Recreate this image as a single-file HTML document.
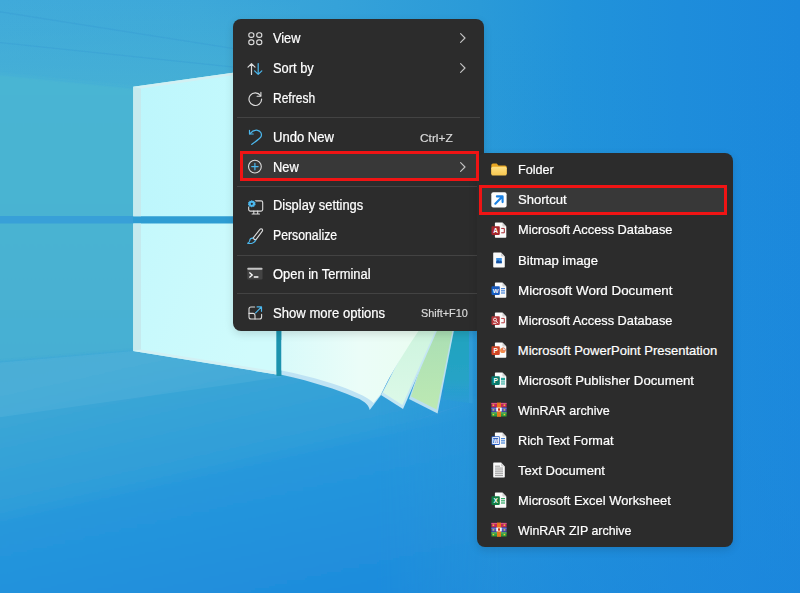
<!DOCTYPE html>
<html lang="en">
<head>
<meta charset="utf-8">
<title>Desktop context menu</title>
<style>
html,body{margin:0;padding:0;}
body{width:800px;height:593px;overflow:hidden;position:relative;background:#2a96d8;font-family:"Liberation Sans",sans-serif;}
#wall{position:absolute;left:0;top:0;width:800px;height:593px;display:block;}
.menu{position:absolute;background:#2c2c2c;border-radius:8px;box-shadow:0 3px 9px rgba(0,0,0,0.13);}
#m1{left:233px;top:19.3px;width:250.6px;height:311.7px;}
#m2{z-index:2;left:477px;top:152.5px;width:255.5px;height:394.5px;}
.row{position:absolute;left:0;right:0;height:30px;color:#fff;font-size:14px;line-height:30px;white-space:nowrap;}
.row .lbl{position:absolute;left:40.2px;top:0px;-webkit-text-stroke:0.22px #fff;display:inline-block;transform-origin:0 50%;}
#m2 .row .lbl{left:40.8px;top:0.3px;font-size:13px;}
.row .key{position:absolute;top:0.8px;right:0;font-size:11.5px;color:#dadada;-webkit-text-stroke:0.2px #dadada;display:inline-block;transform-origin:0 50%;}
.row svg.ic{position:absolute;left:14px;top:7.6px;width:16px;height:16px;overflow:visible;}
#m2 .row svg.ic{top:7px;}
.row svg.chev{position:absolute;left:226px;top:9px;width:8px;height:12px;}
.sep{position:absolute;left:4px;right:4px;height:1px;background:#434343;}
.hl{position:absolute;box-sizing:border-box;border:3.3px solid #f01414;background:#383838;}
</style>
</head>
<body>
<svg id="wall" viewBox="0 0 800 593" width="800" height="593">
  <defs>
    <linearGradient id="gbase" x1="0" y1="0" x2="1" y2="0">
      <stop offset="0" stop-color="#40aada"/>
      <stop offset="0.25" stop-color="#3da8d9"/>
      <stop offset="0.42" stop-color="#35a2d9"/>
      <stop offset="0.6" stop-color="#2a9ad8"/>
      <stop offset="0.72" stop-color="#2193da"/>
      <stop offset="0.85" stop-color="#1e8ddb"/>
      <stop offset="1" stop-color="#1b88dc"/>
    </linearGradient>
    <linearGradient id="gvert" x1="0" y1="0" x2="0" y2="1">
      <stop offset="0" stop-color="#1f8cdc" stop-opacity="0"/>
      <stop offset="0.5" stop-color="#1f8cdc" stop-opacity="0.1"/>
      <stop offset="1" stop-color="#1c86dd" stop-opacity="0.55"/>
    </linearGradient>
    <linearGradient id="gwall" x1="0" y1="0" x2="0" y2="1">
      <stop offset="0" stop-color="#4ab5d3"/>
      <stop offset="0.5" stop-color="#4ab3d2"/>
      <stop offset="1" stop-color="#45aed3"/>
    </linearGradient>
    <linearGradient id="gfloor" gradientUnits="userSpaceOnUse" x1="0" y1="379" x2="69.8" y2="691">
      <stop offset="0" stop-color="#41aad4"/>
      <stop offset="0.22" stop-color="#36a3d7"/>
      <stop offset="0.40" stop-color="#2e9dd9"/>
      <stop offset="0.45" stop-color="#2697db"/>
      <stop offset="0.72" stop-color="#2190dc"/>
      <stop offset="1" stop-color="#1c89dc"/>
    </linearGradient>
    <linearGradient id="gceil" gradientUnits="userSpaceOnUse" x1="0" y1="0" x2="0" y2="85">
      <stop offset="0" stop-color="#46b0d5" stop-opacity="0"/>
      <stop offset="1" stop-color="#46b0d5" stop-opacity="0.88"/>
    </linearGradient>
    <linearGradient id="gfade" x1="0" y1="0" x2="1" y2="0">
      <stop offset="0" stop-color="#fff" stop-opacity="1"/>
      <stop offset="0.75" stop-color="#fff" stop-opacity="1"/>
      <stop offset="1" stop-color="#fff" stop-opacity="0"/>
    </linearGradient>
    <mask id="mfloor"><rect x="0" y="300" width="500" height="300" fill="url(#gfade)"/></mask>
    <linearGradient id="gpane" x1="0" y1="0" x2="1" y2="0">
      <stop offset="0" stop-color="#bdf6fc"/>
      <stop offset="1" stop-color="#c6fafd"/>
    </linearGradient>
    <linearGradient id="gpane2" x1="0" y1="0" x2="1" y2="0.4">
      <stop offset="0" stop-color="#c4f8fc"/>
      <stop offset="1" stop-color="#d0fbfc"/>
    </linearGradient>
    <linearGradient id="gfront" x1="0" y1="0" x2="1" y2="0">
      <stop offset="0" stop-color="#d8fafa"/>
      <stop offset="0.55" stop-color="#ebfdf8"/>
      <stop offset="1" stop-color="#eafdf1"/>
    </linearGradient>
    <linearGradient id="gteal" x1="0" y1="0" x2="0" y2="1">
      <stop offset="0" stop-color="#1fa3bd"/>
      <stop offset="0.7" stop-color="#26a3c6"/>
      <stop offset="1" stop-color="#2a9dd2" stop-opacity="0.6"/>
    </linearGradient>
    <linearGradient id="gp2" x1="0" y1="0" x2="0" y2="1">
      <stop offset="0" stop-color="#cdf4de"/>
      <stop offset="1" stop-color="#dcf9e8"/>
    </linearGradient>
    <linearGradient id="gp3" x1="0" y1="0" x2="0" y2="1">
      <stop offset="0" stop-color="#a9deb4"/>
      <stop offset="1" stop-color="#bde9b3"/>
    </linearGradient>
    <filter id="b1" x="-5%" y="-5%" width="110%" height="110%"><feGaussianBlur stdDeviation="0.6"/></filter>
    <filter id="b2" x="-5%" y="-5%" width="110%" height="110%"><feGaussianBlur stdDeviation="1.5"/></filter>
  </defs>
  <!-- ceiling / base -->
  <rect width="800" height="593" fill="url(#gbase)"/>
  <rect width="800" height="593" fill="url(#gvert)"/>
  <polygon points="-5,-5 300,-5 300,64 134,87.5 -5,73.5" fill="url(#gceil)"/>
  <g filter="url(#b1)" stroke="#3498d0" stroke-opacity="0.35" stroke-width="1.3" fill="none"><path d="M-5,11 L300,59"/><path d="M-5,42 L300,74"/></g>
  <!-- wall -->
  <polygon points="-5,73.5 134,87.5 300,64 300,380 134,351 -5,362.5" fill="url(#gwall)" filter="url(#b2)"/>
  <!-- floor -->
  <g mask="url(#mfloor)">
    <polygon points="-5,362.5 134,351 300,378 500,400 500,600 -5,600" fill="url(#gfloor)" filter="url(#b2)"/>
  </g>
  <polygon points="-5,363 134,351 276.5,374.4 282,377 -5,418" fill="#ffffff" opacity="0.055" filter="url(#b1)"/>
  <!-- horizontal band left -->
  <rect x="-5" y="216" width="140" height="7.5" fill="#37a0d8" filter="url(#b1)"/>
  <g filter="url(#b1)">
    <!-- gap behind panes -->
    <rect x="133" y="215" width="150" height="10" fill="#2f9dd3"/>
    <!-- upper-left pane -->
    <polygon points="133.2,86.8 276.5,66.6 276.5,216.3 133.2,216.3" fill="url(#gpane)"/>
    <polygon points="133.2,86.8 141,88 141,216.3 133.2,216.3" fill="#c6eaee"/>
    <polygon points="133.2,86.8 276.5,66.6 276.5,69 141,88.4" fill="#d2f0f3"/>
    <!-- lower-left pane -->
    <polygon points="133.2,223.4 276.5,223.4 276.5,374.4 133.2,350.9" fill="url(#gpane2)"/>
    <polygon points="133.2,223.4 141,223.4 141,350 133.2,350.9" fill="#c6eaee"/>
    <polygon points="133.2,350.9 276.5,374.4 276.5,371.6 141,349.4" fill="#d3f1f4"/>
    <!-- divider -->
    <rect x="276.5" y="60" width="5" height="316" fill="#1f93ad"/>
    <!-- teal page -->
    <polygon points="450,325 469,325 469,403 443,399.5" fill="url(#gteal)"/>
    <polygon points="469,325 472.5,325 472.5,403.5 469,403" fill="#3aa4dc" opacity="0.5"/>
    <!-- reflection wedge -->
    <polygon points="439.5,411.5 468.5,403.4 405,424" fill="#3a9cdc" opacity="0.45"/>
    <!-- third page -->
    <polygon points="435,325 455,325 437.6,413.5 409,399" fill="#b9dff0"/>
    <polygon points="435,325 453.6,325 436.6,409.6 411,396.4" fill="url(#gp3)"/>
    <!-- second page -->
    <polygon points="417,325 439.5,325 403,409 381,395" fill="#c4e6f3"/>
    <polygon points="417,325 438,325 402.4,405 383,392.6" fill="url(#gp2)"/>
    <!-- front page lip -->
    <path d="M281.5,340 L400,340 Q392,372 381,395 L369.7,410 C368.5,404 363,400 352.5,396.3 C337.5,389.7 315,382.2 281.5,374.7 Z" fill="#bfe3f4"/>
    <!-- front page -->
    <path d="M281.5,325 L422.5,325 Q397,362 380.5,394.5 L373.5,403 C369,398.5 362,395 352.5,391 C337.5,384.6 315,377.6 281.5,370.6 Z" fill="url(#gfront)"/>
  </g>
</svg>

<div class="menu" id="m1">
  <div class="row" style="top:4px"><svg class="ic" viewBox="0 0 16 16"><g fill="none" stroke="#dcdcdc" stroke-width="1.15"><rect x="1.8" y="1.7" width="5.1" height="4.7" rx="2.2"/><rect x="9.7" y="1.7" width="5.1" height="4.7" rx="2.2"/><rect x="1.8" y="8.9" width="5.1" height="4.7" rx="2.2"/><rect x="9.7" y="8.9" width="5.1" height="4.7" rx="2.2"/></g></svg><span class="lbl" style="transform:scaleX(0.910)">View</span><svg class="chev" viewBox="0 0 8 12"><polyline points="1.6,1.7 6,6 1.6,10.3" fill="none" stroke="#c4c4c4" stroke-width="1.15" stroke-linecap="round" stroke-linejoin="round"/></svg></div>
  <div class="row" style="top:34px"><svg class="ic" viewBox="0 0 16 16"><g fill="none" stroke-width="1.2" stroke-linecap="round" stroke-linejoin="round"><path d="M4.5,13.4 V2.7 M1,6.1 L4.5,2.6 L8,6.1" stroke="#dcdcdc"/><path d="M11.2,2.6 V13.3 M7.6,9.9 L11.2,13.4 L14.8,9.9" stroke="#4cb8ee"/></g></svg><span class="lbl" style="transform:scaleX(0.918)">Sort by</span><svg class="chev" viewBox="0 0 8 12"><polyline points="1.6,1.7 6,6 1.6,10.3" fill="none" stroke="#c4c4c4" stroke-width="1.15" stroke-linecap="round" stroke-linejoin="round"/></svg></div>
  <div class="row" style="top:64px"><svg class="ic" viewBox="0 0 16 16"><g transform="translate(0.6,0)"><g fill="none" stroke="#dcdcdc" stroke-width="1.15" stroke-linecap="round" stroke-linejoin="round"><path d="M12.9,4.6 A6.3,6.3 0 1 0 14,8"/><path d="M13.3,1.4 V5.2 H9.5"/></g></g></svg><span class="lbl" style="transform:scaleX(0.859)">Refresh</span></div>
  <div class="sep" style="top:97.5px"></div>
  <div class="row" style="top:102.4px"><svg class="ic" viewBox="0 0 16 16"><g fill="none" stroke="#4cb8ee" stroke-width="1.2" stroke-linecap="round" stroke-linejoin="round"><path d="M2.5,1.3 V5 H6.2"/><path d="M2.8,4.8 C5,2.2 8,0.9 10.5,1.3 C13.5,1.8 15,4.8 14.2,7.3 C13.6,9.2 11,11 4.7,15.4"/></g></svg><span class="lbl" style="transform:scaleX(0.933)">Undo New</span><span class="key" style="top:1.6px;transform:scaleX(1.034);right:31.6px">Ctrl+Z</span></div>
  <div class="hl" style="z-index:3;left:7px;top:131.8px;width:238.8px;height:30px"></div>
  <div class="row" style="z-index:4;top:132.3px"><svg class="ic" viewBox="0 0 16 16"><g fill="none" stroke-linecap="round"><circle cx="7.9" cy="7.6" r="6.4" stroke="#dcdcdc" stroke-width="1.1"/><path d="M7.9,4.4 V10.8 M4.7,7.6 H11.1" stroke="#4cb8ee" stroke-width="1.2"/></g></svg><span class="lbl" style="transform:scaleX(0.917)">New</span><svg class="chev" viewBox="0 0 8 12"><polyline points="1.6,1.7 6,6 1.6,10.3" fill="none" stroke="#c4c4c4" stroke-width="1.15" stroke-linecap="round" stroke-linejoin="round"/></svg></div>
  <div class="sep" style="top:166.3px"></div>
  <div class="row" style="top:171px"><svg class="ic" viewBox="0 0 16 16"><g transform="translate(0.5,0.9)"><g fill="none" stroke="#dcdcdc" stroke-width="1.1" stroke-linejoin="round"><rect x="1.2" y="2" width="14" height="10.2" rx="1.6"/><path d="M6.3,12.2 V15 M10.2,12.2 V15 M4.6,15.1 H12" stroke-linecap="round"/></g><circle cx="4.3" cy="4.7" r="4.5" fill="#2c2c2c"/><path d="M4.3,1.2 l1,0.9 1.3,-0.3 0.4,1.3 1.2,0.6 -0.5,1.2 0.5,1.2 -1.2,0.6 -0.4,1.3 -1.3,-0.3 -1,0.9 -1,-0.9 -1.3,0.3 -0.4,-1.3 -1.2,-0.6 0.5,-1.2 -0.5,-1.2 1.2,-0.6 0.4,-1.3 1.3,0.3z" fill="#4cb8ee"/><circle cx="4.3" cy="4.9" r="1.1" fill="#2c2c2c"/></g></svg><span class="lbl" style="transform:scaleX(0.920)">Display settings</span></div>
  <div class="row" style="top:201px"><svg class="ic" viewBox="0 0 16 16"><g fill="none" stroke-width="1.1" stroke-linejoin="round" stroke-linecap="round"><path d="M14.6,0.9 C15.6,1.2 15.9,2.3 15.3,3.1 L8.6,12.2 L6,10.2 L12.9,1.4 C13.3,0.9 14,0.7 14.6,0.9Z" stroke="#dcdcdc"/><path d="M6,10.2 C4,10 2.8,11.5 2.6,13 C2.5,14 1.5,14.8 0.6,15.2 C3.5,16 7.5,15.3 8.6,12.2" stroke="#4cb8ee"/></g></svg><span class="lbl" style="transform:scaleX(0.876)">Personalize</span></div>
  <div class="sep" style="top:235.5px"></div>
  <div class="row" style="top:239.5px"><svg class="ic" viewBox="0 0 16 16"><rect x="0.3" y="1.8" width="15.2" height="11.6" rx="1" fill="#444"/><rect x="0.3" y="1.8" width="15.2" height="1.9" rx="0.8" fill="#c4c4c4"/><polyline points="2.4,6.6 5.2,9 2.4,11.4" fill="none" stroke="#fff" stroke-width="1.3"/><path d="M6.8,11 H11.4" stroke="#fff" stroke-width="1.5"/></svg><span class="lbl" style="transform:scaleX(0.924)">Open in Terminal</span></div>
  <div class="sep" style="top:273.5px"></div>
  <div class="row" style="top:278px"><svg class="ic" viewBox="0 0 16 16"><g fill="none" stroke-width="1.1" stroke-linecap="round" stroke-linejoin="round"><path d="M7.6,2 H4 a2,2 0 0 0 -2,2 V12 a2,2 0 0 0 2,2 H12.6 a2,2 0 0 0 2,-2 V9.2" stroke="#dcdcdc"/><path d="M2,8.4 H6 a2,2 0 0 1 2,2 V14" stroke="#dcdcdc"/><path d="M8.6,7.8 L14.3,2.1 M10.1,1.9 H14.5 V6.3" stroke="#4cb8ee" stroke-width="1.2"/></g></svg><span class="lbl" style="top:0.8px;transform:scaleX(0.936)">Show more options</span><span class="key" style="right:13px;transform:scaleX(0.943)">Shift+F10</span></div>
</div>

<div class="menu" id="m2">
  <div class="row" style="top:2.5px"><svg class="ic" viewBox="0 0 16 16"><defs><linearGradient id="gfo" x1="0" y1="0" x2="0" y2="1"><stop offset="0" stop-color="#ffe083"/><stop offset="1" stop-color="#f7c64e"/></linearGradient></defs><path d="M0.3,3.3 a1.7,1.7 0 0 1 1.7,-1.7 H5.6 l1.9,1.8 H14 a1.7,1.7 0 0 1 1.7,1.7 V12 H0.3Z" fill="#e8a622"/><rect x="0.3" y="4.7" width="15.4" height="8.9" rx="1.5" fill="url(#gfo)"/></svg><span class="lbl" style="top:0.30px;transform:scaleX(0.971)">Folder</span></div>
  <div class="hl" style="left:1.8px;top:32.5px;width:248.6px;height:30.3px"></div>
  <div class="row" style="top:32.5px"><svg class="ic" viewBox="0 0 16 16"><rect x="0.3" y="0.3" width="15.3" height="15.3" rx="2" fill="#fdfdfd"/><path d="M4.3,11.7 L11.2,4.8 M5.9,4.4 H11.6 V10.1" fill="none" stroke="#1a80e2" stroke-width="2.1" stroke-linecap="round" stroke-linejoin="round"/></svg><span class="lbl" style="top:0.37px;transform:scaleX(1.006)">Shortcut</span></div>
  <div class="row" style="top:62.5px"><svg class="ic" viewBox="0 0 16 16"><path d="M4.6,0.6 H11.4 L15.3,4.5 V15 a0.7,0.7 0 0 1 -0.7,0.7 H4.6 a0.7,0.7 0 0 1 -0.7,-0.7 V1.3 a0.7,0.7 0 0 1 0.7,-0.7Z" fill="#fafafa"/><path d="M11.4,0.6 V3.8 a0.7,0.7 0 0 0 0.7,0.7 H15.3Z" fill="#d0d0d0"/><g fill="none" stroke="#a4262c" stroke-width="1"><path d="M10.2,6.4 H13.3 V10.8 H10.2"/></g><rect x="0.5" y="4.3" width="8.3" height="8.6" rx="0.8" fill="#a4262c"/><text x="4.6" y="11" font-family="Liberation Sans, sans-serif" font-size="6.6" font-weight="bold" fill="#fff" text-anchor="middle">A</text></svg><span class="lbl" style="top:0.44px;transform:scaleX(0.985)">Microsoft Access Database</span></div>
  <div class="row" style="top:92.5px"><svg class="ic" viewBox="0 0 16 16"><path d="M2.9,0.6 H10 L13.8,4.4 V14.7 a0.7,0.7 0 0 1 -0.7,0.7 H2.9 a0.7,0.7 0 0 1 -0.7,-0.7 V1.3 a0.7,0.7 0 0 1 0.7,-0.7Z" fill="#fafafa"/><path d="M10,0.6 V3.7 a0.7,0.7 0 0 0 0.7,0.7 H13.8Z" fill="#cfcfcf"/><rect x="5.2" y="6" width="5.6" height="5.2" fill="#3b8fe0"/><path d="M5.2,11.2 V9.6 l1.8,-1.5 1.6,1.3 1,-0.8 1.2,1 V11.2Z" fill="#164f9e"/></svg><span class="lbl" style="top:0.51px;transform:scaleX(1.006)">Bitmap image</span></div>
  <div class="row" style="top:122.5px"><svg class="ic" viewBox="0 0 16 16"><path d="M4.6,0.6 H11.4 L15.3,4.5 V15 a0.7,0.7 0 0 1 -0.7,0.7 H4.6 a0.7,0.7 0 0 1 -0.7,-0.7 V1.3 a0.7,0.7 0 0 1 0.7,-0.7Z" fill="#fafafa"/><path d="M11.4,0.6 V3.8 a0.7,0.7 0 0 0 0.7,0.7 H15.3Z" fill="#d0d0d0"/><g fill="#4a86d8"><rect x="10" y="6" width="4" height="1.2"/><rect x="10" y="8.2" width="4" height="1.2"/><rect x="10" y="10.4" width="4" height="1.2"/></g><rect x="0.5" y="4.3" width="8.3" height="8.6" rx="0.8" fill="#185abd"/><text x="4.6" y="11" font-family="Liberation Sans, sans-serif" font-size="6.2" font-weight="bold" fill="#fff" text-anchor="middle">W</text></svg><span class="lbl" style="top:0.58px;transform:scaleX(1.030)">Microsoft Word Document</span></div>
  <div class="row" style="top:152.5px"><svg class="ic" viewBox="0 0 16 16"><path d="M4.6,0.6 H11.4 L15.3,4.5 V15 a0.7,0.7 0 0 1 -0.7,0.7 H4.6 a0.7,0.7 0 0 1 -0.7,-0.7 V1.3 a0.7,0.7 0 0 1 0.7,-0.7Z" fill="#fafafa"/><path d="M11.4,0.6 V3.8 a0.7,0.7 0 0 0 0.7,0.7 H15.3Z" fill="#d0d0d0"/><g fill="none" stroke="#b3363a" stroke-width="1"><path d="M10.2,6.4 H13.3 V10.8 H10.2"/></g><rect x="0.5" y="4.3" width="8.3" height="8.6" rx="0.8" fill="#b3363a"/><text x="4.6" y="11" font-family="Liberation Sans, sans-serif" font-size="6.6" font-weight="bold" fill="#fff" text-anchor="middle"></text><g fill="none" stroke="#fff" stroke-width="0.9"><circle cx="4" cy="7.6" r="1.5"/><path d="M5,8.8 L7,11.2 M2.2,11.3 H5.4"/></g></svg><span class="lbl" style="top:0.65px;transform:scaleX(0.985)">Microsoft Access Database</span></div>
  <div class="row" style="top:182.5px"><svg class="ic" viewBox="0 0 16 16"><path d="M4.6,0.6 H11.4 L15.3,4.5 V15 a0.7,0.7 0 0 1 -0.7,0.7 H4.6 a0.7,0.7 0 0 1 -0.7,-0.7 V1.3 a0.7,0.7 0 0 1 0.7,-0.7Z" fill="#fafafa"/><path d="M11.4,0.6 V3.8 a0.7,0.7 0 0 0 0.7,0.7 H15.3Z" fill="#d0d0d0"/><circle cx="11.8" cy="8.4" r="2.7" fill="#f08a4a"/><path d="M11.8,8.4 V5.7 A2.7,2.7 0 0 1 14.5,8.4Z" fill="#fafafa" stroke="#d04525" stroke-width="0.5"/><rect x="0.5" y="4.3" width="8.3" height="8.6" rx="0.8" fill="#d04525"/><text x="4.7" y="11" font-family="Liberation Sans, sans-serif" font-size="6.6" font-weight="bold" fill="#fff" text-anchor="middle">P</text></svg><span class="lbl" style="top:0.72px;transform:scaleX(1.000)">Microsoft PowerPoint Presentation</span></div>
  <div class="row" style="top:212.5px"><svg class="ic" viewBox="0 0 16 16"><path d="M4.6,0.6 H11.4 L15.3,4.5 V15 a0.7,0.7 0 0 1 -0.7,0.7 H4.6 a0.7,0.7 0 0 1 -0.7,-0.7 V1.3 a0.7,0.7 0 0 1 0.7,-0.7Z" fill="#fafafa"/><path d="M11.4,0.6 V3.8 a0.7,0.7 0 0 0 0.7,0.7 H15.3Z" fill="#d0d0d0"/><rect x="10" y="5.8" width="4" height="2.6" fill="#26a69a"/><rect x="10" y="9.4" width="4" height="1.1" fill="#26a69a"/><rect x="10" y="11.4" width="4" height="1.1" fill="#26a69a"/><rect x="0.5" y="4.3" width="8.3" height="8.6" rx="0.8" fill="#087a6c"/><text x="4.7" y="11" font-family="Liberation Sans, sans-serif" font-size="6.6" font-weight="bold" fill="#fff" text-anchor="middle">P</text></svg><span class="lbl" style="top:0.79px;transform:scaleX(1.015)">Microsoft Publisher Document</span></div>
  <div class="row" style="top:242.5px"><svg class="ic" viewBox="0 0 16 16"><rect x="0.4" y="0.9" width="15.2" height="4.2" fill="#c2255c"/><rect x="0.4" y="5.6" width="15.2" height="4.2" fill="#4a52c0"/><rect x="0.4" y="10.3" width="15.2" height="4.2" fill="#2f9a3c"/><rect x="0.4" y="0.9" width="15.2" height="1.1" fill="#e06a94" opacity="0.7"/><rect x="0.4" y="5.6" width="15.2" height="1.1" fill="#8a90e0" opacity="0.7"/><rect x="0.4" y="10.3" width="15.2" height="1.1" fill="#7fd08a" opacity="0.7"/><rect x="6" y="0.6" width="4" height="14.2" fill="#e8761e"/><rect x="5.2" y="5.6" width="5.6" height="3.8" fill="#f2f2f2"/><rect x="7" y="6.3" width="2" height="2.4" fill="#c8311c"/><g fill="#f0d030"><rect x="1.6" y="2.5" width="1.6" height="1.4"/><rect x="12.6" y="2.5" width="1.6" height="1.4"/><rect x="1.6" y="7.2" width="1.6" height="1.4"/><rect x="12.6" y="7.2" width="1.6" height="1.4"/><rect x="1.6" y="11.9" width="1.6" height="1.4"/><rect x="12.6" y="11.9" width="1.6" height="1.4"/></g></svg><span class="lbl" style="top:0.86px;transform:scaleX(0.961)">WinRAR archive</span></div>
  <div class="row" style="top:272.5px"><svg class="ic" viewBox="0 0 16 16"><path d="M4.6,0.6 H11.4 L15.3,4.5 V15 a0.7,0.7 0 0 1 -0.7,0.7 H4.6 a0.7,0.7 0 0 1 -0.7,-0.7 V1.3 a0.7,0.7 0 0 1 0.7,-0.7Z" fill="#fafafa"/><path d="M11.4,0.6 V3.8 a0.7,0.7 0 0 0 0.7,0.7 H15.3Z" fill="#d0d0d0"/><g fill="#4a86d8"><rect x="10" y="6" width="4" height="1.2"/><rect x="10" y="8.2" width="4" height="1.2"/><rect x="10" y="10.4" width="4" height="1.2"/></g><rect x="0.5" y="4.3" width="8.3" height="8.6" rx="0.8" fill="#2a5fc4"/><text x="4.6" y="11" font-family="Liberation Sans, sans-serif" font-size="6.6" font-weight="bold" fill="#fff" text-anchor="middle"></text><rect x="1.7" y="5.6" width="5.9" height="5.9" fill="none" stroke="#fff" stroke-width="0.9"/><text x="4.65" y="10.6" font-family="Liberation Sans, sans-serif" font-size="5" font-weight="bold" fill="#fff" text-anchor="middle">W</text></svg><span class="lbl" style="top:0.93px;transform:scaleX(0.974)">Rich Text Format</span></div>
  <div class="row" style="top:302.5px"><svg class="ic" viewBox="0 0 16 16"><path d="M2.9,0.6 H10 L13.8,4.4 V14.7 a0.7,0.7 0 0 1 -0.7,0.7 H2.9 a0.7,0.7 0 0 1 -0.7,-0.7 V1.3 a0.7,0.7 0 0 1 0.7,-0.7Z" fill="#fafafa"/><path d="M10,0.6 V3.7 a0.7,0.7 0 0 0 0.7,0.7 H13.8Z" fill="#cfcfcf"/><g fill="#8f8f8f"><rect x="4" y="5.6" width="8" height="0.9"/><rect x="4" y="7.5" width="8" height="0.9"/><rect x="4" y="9.4" width="8" height="0.9"/><rect x="4" y="11.3" width="8" height="0.9"/><rect x="4" y="13.2" width="8" height="0.9"/><rect x="4" y="3.7" width="5" height="0.9"/></g></svg><span class="lbl" style="top:1.00px;transform:scaleX(1.001)">Text Document</span></div>
  <div class="row" style="top:332.5px"><svg class="ic" viewBox="0 0 16 16"><path d="M4.6,0.6 H11.4 L15.3,4.5 V15 a0.7,0.7 0 0 1 -0.7,0.7 H4.6 a0.7,0.7 0 0 1 -0.7,-0.7 V1.3 a0.7,0.7 0 0 1 0.7,-0.7Z" fill="#fafafa"/><path d="M11.4,0.6 V3.8 a0.7,0.7 0 0 0 0.7,0.7 H15.3Z" fill="#d0d0d0"/><g fill="#33a867"><rect x="10" y="6" width="4" height="1.2"/><rect x="10" y="8.2" width="4" height="1.2"/><rect x="10" y="10.4" width="4" height="1.2"/></g><rect x="0.5" y="4.3" width="8.3" height="8.6" rx="0.8" fill="#107c41"/><text x="4.65" y="11" font-family="Liberation Sans, sans-serif" font-size="6.6" font-weight="bold" fill="#fff" text-anchor="middle">X</text></svg><span class="lbl" style="top:1.07px;transform:scaleX(0.994)">Microsoft Excel Worksheet</span></div>
  <div class="row" style="top:362.5px"><svg class="ic" viewBox="0 0 16 16"><rect x="0.4" y="0.9" width="15.2" height="4.2" fill="#c2255c"/><rect x="0.4" y="5.6" width="15.2" height="4.2" fill="#4a52c0"/><rect x="0.4" y="10.3" width="15.2" height="4.2" fill="#2f9a3c"/><rect x="0.4" y="0.9" width="15.2" height="1.1" fill="#e06a94" opacity="0.7"/><rect x="0.4" y="5.6" width="15.2" height="1.1" fill="#8a90e0" opacity="0.7"/><rect x="0.4" y="10.3" width="15.2" height="1.1" fill="#7fd08a" opacity="0.7"/><rect x="6" y="0.6" width="4" height="14.2" fill="#e8761e"/><rect x="5.2" y="5.6" width="5.6" height="3.8" fill="#f2f2f2"/><rect x="7" y="6.3" width="2" height="2.4" fill="#c8311c"/><g fill="#f0d030"><rect x="1.6" y="2.5" width="1.6" height="1.4"/><rect x="12.6" y="2.5" width="1.6" height="1.4"/><rect x="1.6" y="7.2" width="1.6" height="1.4"/><rect x="12.6" y="7.2" width="1.6" height="1.4"/><rect x="1.6" y="11.9" width="1.6" height="1.4"/><rect x="12.6" y="11.9" width="1.6" height="1.4"/></g></svg><span class="lbl" style="top:1.14px;transform:scaleX(0.953)">WinRAR ZIP archive</span></div>
</div>
</body>
</html>
